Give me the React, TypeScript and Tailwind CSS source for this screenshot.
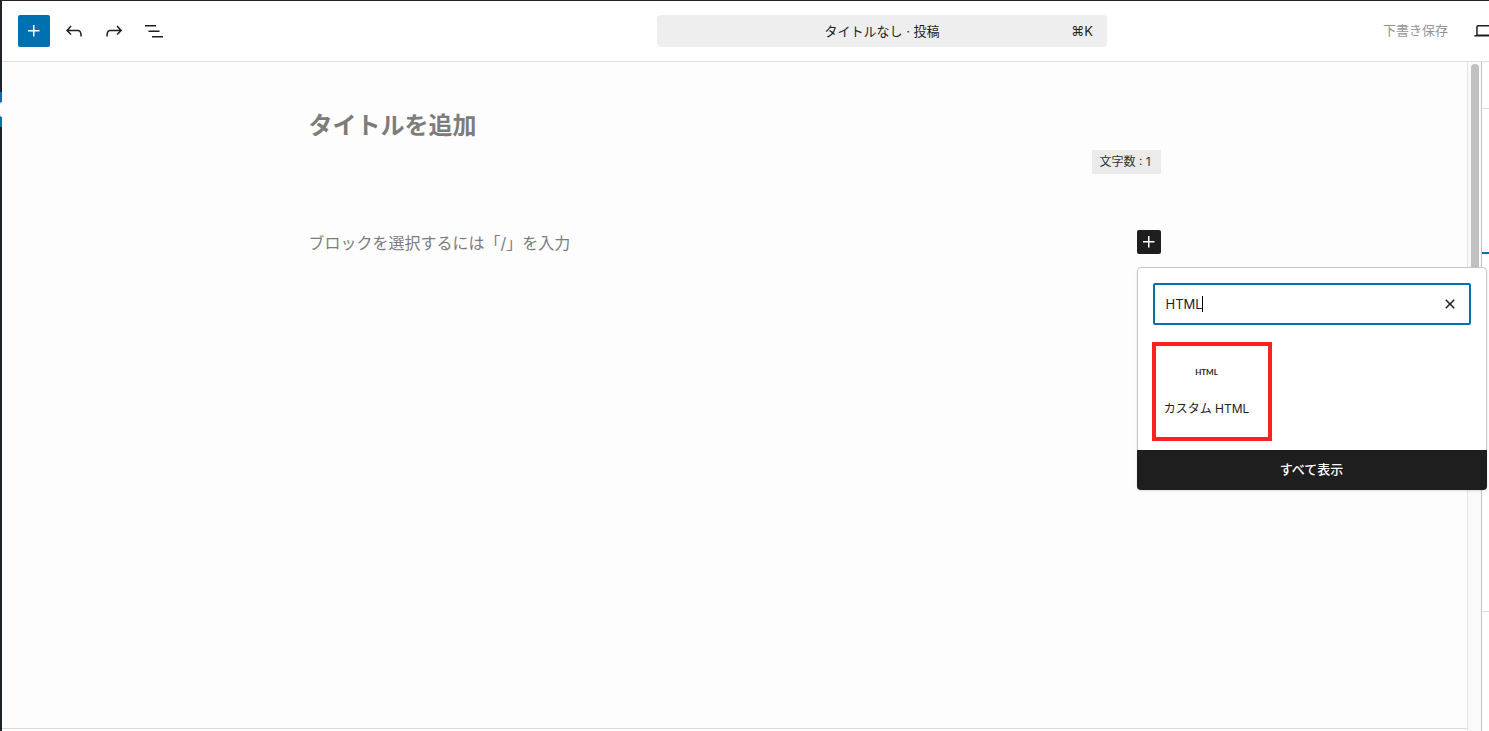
import { useState } from "react"
import type { ReactNode } from "react"

const ICONS = {
  plus: "M11 12.5V17.5H12.5V12.5H17.5V11H12.5V6H11V11H6V12.5H11Z",
  undo: "M18.3 11.7c-.6-.6-1.4-.9-2.3-.9H6.7l2.9-3.3-1.1-1-4.5 5L8.5 16l1-1-2.7-2.7H16c.5 0 .9.2 1.3.5 1 1 1 3.4 1 4.5v.3h1.5v-.2c0-1.5 0-4.3-1.5-5.7z",
  redo: "M15.6 6.5l-1.1 1 2.9 3.3H8c-.9 0-1.7.3-2.3.9-1.4 1.5-1.4 4.2-1.4 5.6v.2h1.5v-.3c0-1.1 0-3.5 1-4.5.3-.3.7-.5 1.3-.5h9.2L14.5 15l1.1 1.1 4.6-4.6-4.6-5z",
  listView: "M3 6h11v1.5H3V6Zm3.5 5.5h11V13h-11v-1.5ZM21 17H10v1.5h11V17Z",
  desktop:
    "M20.5 16h-.7V8c0-1.1-.9-2-2-2H6.2c-1.1 0-2 .9-2 2v8h-.7c-.8 0-1.5.7-1.5 1.5h20c0-.8-.7-1.5-1.5-1.5zM5.7 8c0-.3.2-.5.5-.5h11.6c.3 0 .5.2.5.5v7.6H5.7V8z",
  close:
    "M12 13.06l3.712 3.713 1.061-1.06L13.061 12l3.712-3.712-1.06-1.06L12 10.938 8.288 7.227l-1.061 1.06L10.939 12l-3.712 3.712 1.06 1.061L12 13.061z",
}

function Icon({ name }: { name: keyof typeof ICONS }) {
  return (
    <svg viewBox="0 0 24 24" className="w-6 h-6 shrink-0 fill-current" aria-hidden="true">
      <path d={ICONS[name]} />
    </svg>
  )
}

function ToolButton({ label, children }: { label: string; children: ReactNode }) {
  return (
    <button type="button" aria-label={label} className="w-8 h-8 flex items-center justify-center">
      {children}
    </button>
  )
}

function AdminMenuEdge() {
  return (
    <div className="w-[2px] shrink-0 bg-[#1d2327] flex flex-col">
      <div className="h-[91px]" />
      <div className="h-[35px] bg-[#0071b0] flex items-center">
        <div className="w-full h-[15px] rounded-l-full bg-white" />
      </div>
    </div>
  )
}

function Header() {
  return (
    <header className="h-[61px] flex items-center bg-white border-b border-[#dddddd]">
      <div className="flex-1 flex items-center gap-2 pl-4">
        <button
          type="button"
          aria-label="ブロック挿入ツール"
          className="w-8 h-8 flex items-center justify-center rounded-xs bg-[#0071b0] text-white"
        >
          <Icon name="plus" />
        </button>
        <ToolButton label="元に戻す">
          <Icon name="undo" />
        </ToolButton>
        <ToolButton label="やり直す">
          <Icon name="redo" />
        </ToolButton>
        <ToolButton label="リスト表示">
          <Icon name="listView" />
        </ToolButton>
      </div>
      <button
        type="button"
        className="w-[450px] h-8 grid grid-cols-[1fr_auto_1fr] items-center rounded-sm bg-[#eeeeee] px-[14px]"
      >
        <span className="col-start-2">タイトルなし · 投稿</span>
        <span className="text-right">⌘K</span>
      </button>
      <div className="w-[382px] flex justify-end">
        <div className="w-[106px] flex items-center gap-6 overflow-hidden">
          <button type="button" className="shrink-0 whitespace-nowrap pb-[2px] text-[#949494]">
            下書き保存
          </button>
          <button type="button" aria-label="表示" className="shrink-0">
            <Icon name="desktop" />
          </button>
        </div>
      </div>
    </header>
  )
}

function QuickInserter() {
  const [query, setQuery] = useState("HTML")

  return (
    <div className="absolute z-10 left-0 top-[37px] w-[350px] bg-white border border-[#c6c6c6] rounded-sm shadow-sm">
      <div className="px-[15px] pt-[15px] pb-4">
        <div className="relative">
          <input
            type="text"
            aria-label="検索"
            value={query}
            onChange={(e) => setQuery(e.target.value)}
            className="block w-full h-[42px] border-2 border-[#0073ad] rounded-xs pl-[11px] pr-10 bg-white focus:outline-none"
          />
          {query === "HTML" && <span className="absolute left-[49px] top-[13px] w-px h-4 bg-black" />}
          <button
            type="button"
            aria-label="検索をリセット"
            onClick={() => setQuery("")}
            className="absolute right-[9px] top-[9px]"
          >
            <Icon name="close" />
          </button>
        </div>
        <div className="grid grid-cols-3 mt-[19px]">
          <div className="relative">
            <button type="button" className="w-full flex flex-col items-center gap-4 py-4 pl-[2px] text-xs/[18px]">
              <span className="h-6 flex items-center text-[8px]/[8px] font-bold font-[Lato,sans-serif]">HTML</span>
              <span className="whitespace-nowrap">カスタム HTML</span>
            </button>
            <div className="absolute -left-px -top-[2px] w-[120px] h-[99px] border-4 border-[#ff2020] pointer-events-none" />
          </div>
        </div>
      </div>
      <button
        type="button"
        className="block w-[350px] h-10 -mx-px -mb-px pb-[2px] rounded-b-sm bg-[#1e1e1e] text-white font-medium"
      >
        すべて表示
      </button>
    </div>
  )
}

function Canvas() {
  return (
    <main className="flex-1 flex flex-col bg-white">
      <div className="flex-1 bg-[#fdfdfd] border-b border-[#d9d9d9]">
        <div className="max-w-[852px] mx-auto pt-[46px] flex flex-col">
          <h1 className="text-2xl/9 font-bold text-[#7c7c7c]">タイトルを追加</h1>
          <div className="self-end mt-[6px] h-6 min-w-[69px] px-2 flex items-center bg-[#ebebeb] text-xs text-[#333333]">
            文字数 : 1
          </div>
          <div className="mt-14 flex items-center justify-between">
            <p className="pt-[2px] text-base/[22px] text-[#7c7c7c]">ブロックを選択するには「/」を入力</p>
            <div className="relative">
              <button
                type="button"
                aria-label="ブロックを追加"
                className="flex rounded-xs bg-[#1e1e1e] text-white"
              >
                <Icon name="plus" />
              </button>
              <QuickInserter />
            </div>
          </div>
        </div>
      </div>
      <div className="h-[2px]" />
    </main>
  )
}

function ScrollTrack() {
  return (
    <div className="w-[15px] shrink-0 flex justify-center pt-[2px] bg-[#fafafa] border-l border-r border-l-[#e4e4e4] border-r-[#c4c4c4]">
      <div className="w-2 h-[300px] rounded-full bg-[#c1c1c1]" />
    </div>
  )
}

function SettingsEdge() {
  return (
    <aside className="w-[7px] shrink-0 bg-white">
      <div className="h-[47px] border-b border-[#dddddd]" />
      <div className="h-[145px] border-b-2 border-[#0071b0]" />
      <div className="h-[358px] border-b border-[#dddddd]" />
    </aside>
  )
}

export default function App() {
  return (
    <div className="min-h-screen flex border-t border-[#1d2327] bg-white text-[13px]/5 text-[#1e1e1e] font-[Inter,'Noto_Sans_CJK_JP',sans-serif]">
      <AdminMenuEdge />
      <div className="flex-1 flex flex-col">
        <Header />
        <div className="flex-1 flex">
          <Canvas />
          <ScrollTrack />
          <SettingsEdge />
        </div>
      </div>
    </div>
  )
}
